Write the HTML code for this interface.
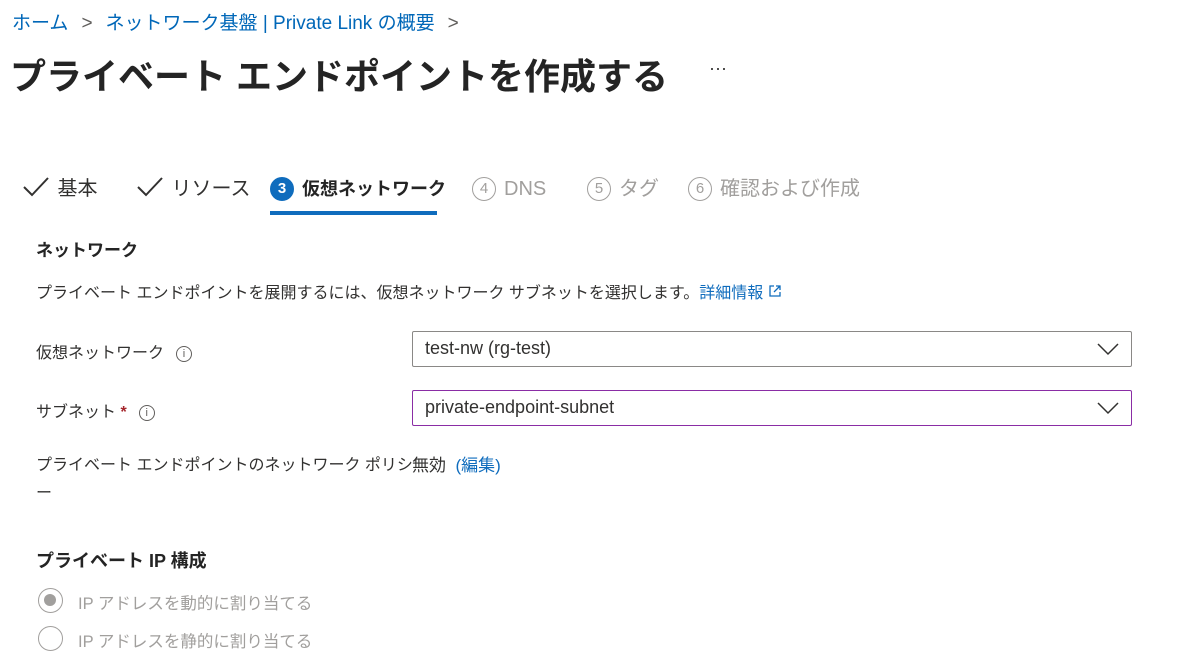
<!DOCTYPE html>
<html><head><meta charset="utf-8"><style>
*{margin:0;padding:0;box-sizing:border-box}
body{width:1189px;height:652px;overflow:hidden;background:#fff;font-family:"Liberation Sans","Noto Sans CJK JP",sans-serif;color:#323130;position:relative}
.a{position:absolute;white-space:nowrap}
.bc{top:8px;left:12px;font-size:19px;color:#0067b8}
.bc span{color:#605e5c;margin:0 13px}
.title{top:48px;left:10px;font-size:36px;font-weight:bold;color:#242424}
.dots{top:58px;left:709px;font-size:18px;color:#323130}
.tab{top:176px;font-size:20px;line-height:26px}
.num{display:inline-block;width:24px;height:24px;border-radius:50%;border:1.5px solid #a19f9d;color:#a19f9d;font-size:15px;text-align:center;line-height:21px;vertical-align:2px;margin-right:8px}
.gray{color:#a19f9d}
.h{font-size:17px;font-weight:bold;color:#242424}
.t{font-size:16px}
.dd{position:absolute;left:412px;width:720px;height:36px;border:1px solid #8a8886;border-radius:2px;font-size:18px;padding-left:12px;line-height:33px;color:#323130}
.dd svg{position:absolute;right:12px;top:11px}
.info{display:inline-block;width:16px;height:16px;border:1px solid #605e5c;border-radius:50%;font-size:11px;text-align:center;line-height:14px;vertical-align:1px;margin-left:12px;color:#605e5c}
.radio{position:absolute;left:38px;width:25px;height:25px;border:1.5px solid #a19f9d;border-radius:50%}
</style></head><body>
<div class="a bc">ホーム<span>&gt;</span>ネットワーク基盤 | Private Link の概要<span>&gt;</span></div>
<div class="a title">プライベート エンドポイントを作成する</div>
<div class="a dots">···</div>
<div class="a tab" style="left:22px">
<svg width="30" height="22" style="vertical-align:-3px"><path d="M2 11l8 8L26 2" stroke="#323130" stroke-width="2" fill="none"/></svg> 基本</div>
<div class="a tab" style="left:136px">
<svg width="30" height="22" style="vertical-align:-3px"><path d="M2 11l8 8L26 2" stroke="#323130" stroke-width="2" fill="none"/></svg> リソース</div>
<div class="a tab" style="left:270px;font-weight:bold;color:#242424;font-size:18px"><span class="num" style="background:#0f6cbd;border-color:#0f6cbd;color:#fff;font-weight:bold">3</span>仮想ネットワーク</div>
<div class="a" style="left:270px;top:211px;width:167px;height:4px;background:#0f6cbd"></div>
<div class="a tab gray" style="left:472px"><span class="num">4</span>DNS</div>
<div class="a tab gray" style="left:587px"><span class="num">5</span>タグ</div>
<div class="a tab gray" style="left:688px"><span class="num">6</span>確認および作成</div>
<div class="a h" style="left:36px;top:236px">ネットワーク</div>
<div class="a t" style="left:36px;top:279px">プライベート エンドポイントを展開するには、仮想ネットワーク サブネットを選択します。<span style="color:#0f6cbd">詳細情報 <svg width="14" height="14" style="vertical-align:0"><path d="M6 2H2v10h10V8M8 2h4v4M12 2L6 8" stroke="#0f6cbd" stroke-width="1.3" fill="none"/></svg></span></div>
<div class="a t" style="left:36px;top:339px">仮想ネットワーク<span class="info">i</span></div>
<div class="dd" style="top:331px">test-nw (rg-test)<svg width="22" height="13"><path d="M1 1l10 10L21 1" stroke="#323130" stroke-width="1.5" fill="none"/></svg></div>
<div class="a t" style="left:36px;top:398px">サブネット <span style="color:#a4262c;font-weight:bold">*</span><span class="info">i</span></div>
<div class="dd" style="top:390px;border-color:#8a2da5">private-endpoint-subnet<svg width="22" height="13"><path d="M1 1l10 10L21 1" stroke="#323130" stroke-width="1.5" fill="none"/></svg></div>
<div class="a t" style="left:36px;top:452px;line-height:28px">プライベート エンドポイントのネットワーク ポリシ<br>ー</div>
<div class="a t" style="left:412px;top:451px;font-size:17px">無効&nbsp; <span style="color:#0f6cbd">(編集)</span></div>
<div class="a h" style="left:36px;top:547px;font-size:18px">プライベート IP 構成</div>
<div class="radio" style="top:588px"><div style="position:absolute;left:5px;top:5px;width:12px;height:12px;border-radius:50%;background:#a19f9d"></div></div>
<div class="a t gray" style="left:78px;top:590px;font-size:16.5px">IP アドレスを動的に割り当てる</div>
<div class="radio" style="top:626px"></div>
<div class="a t gray" style="left:78px;top:628px;font-size:16.5px">IP アドレスを静的に割り当てる</div>
</body></html>
